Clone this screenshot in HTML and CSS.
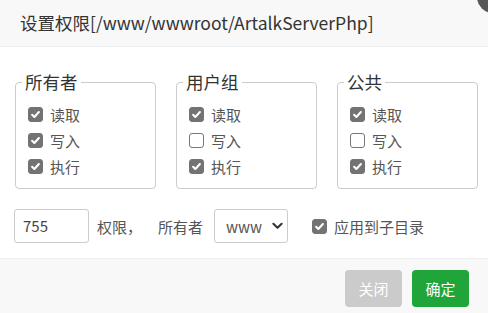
FILE: index.html
```html
<!DOCTYPE html>
<html>
<head>
<meta charset="utf-8">
<link rel="stylesheet" href="styles.css">
</head>
<body>
<div class="dialog">
  <div class="header">设置权限[/www/wwwroot/ArtalkServerPhp]</div>
  <span class="close-btn"></span>
  <div class="content">
    <div class="groups">
      <fieldset class="group">
        <legend>所有者</legend>
        <label class="row"><span class="box on"><svg viewBox="0 0 15 15"><path d="M3.6 7.8 L6.2 10.4 L11.4 4.6" /></svg></span>读取</label>
        <label class="row"><span class="box on"><svg viewBox="0 0 15 15"><path d="M3.6 7.8 L6.2 10.4 L11.4 4.6" /></svg></span>写入</label>
        <label class="row"><span class="box on"><svg viewBox="0 0 15 15"><path d="M3.6 7.8 L6.2 10.4 L11.4 4.6" /></svg></span>执行</label>
      </fieldset>
      <fieldset class="group">
        <legend>用户组</legend>
        <label class="row"><span class="box on"><svg viewBox="0 0 15 15"><path d="M3.6 7.8 L6.2 10.4 L11.4 4.6" /></svg></span>读取</label>
        <label class="row"><span class="box"></span>写入</label>
        <label class="row"><span class="box on"><svg viewBox="0 0 15 15"><path d="M3.6 7.8 L6.2 10.4 L11.4 4.6" /></svg></span>执行</label>
      </fieldset>
      <fieldset class="group">
        <legend>公共</legend>
        <label class="row"><span class="box on"><svg viewBox="0 0 15 15"><path d="M3.6 7.8 L6.2 10.4 L11.4 4.6" /></svg></span>读取</label>
        <label class="row"><span class="box"></span>写入</label>
        <label class="row"><span class="box on"><svg viewBox="0 0 15 15"><path d="M3.6 7.8 L6.2 10.4 L11.4 4.6" /></svg></span>执行</label>
      </fieldset>
    </div>
    <div class="bottom">
      <div class="input">755</div>
      <span class="lbl1">权限，</span>
      <span class="lbl2">所有者</span>
      <div class="select"><span>www</span><svg class="chev" viewBox="0 0 12 8"><path d="M1.5 1.5 L6 6 L10.5 1.5"/></svg></div>
      <label class="row sub"><span class="box on"><svg viewBox="0 0 15 15"><path d="M3.6 7.8 L6.2 10.4 L11.4 4.6" /></svg></span>应用到子目录</label>
    </div>
  </div>
  <div class="footer">
    <button class="btn gray">关闭</button>
    <button class="btn green">确定</button>
  </div>
</div>
</body>
</html>
```
FILE: styles.css
```css
html, body {
  margin: 0;
  padding: 0;
  background: #fff;
  overflow: hidden;
}
body {
  font-family: "Noto Sans CJK SC", "Noto Sans", sans-serif;
  color: #333;
}
.dialog {
  position: relative;
  width: 488px;
  height: 313px;
}
.header {
  height: 46px;
  line-height: 46px;
  padding-left: 20px;
  font-size: 17.5px;
  color: #333;
  background: #f8f8f8;
  border-bottom: 1px solid #eee;
}
.close-btn {
  position: absolute;
  left: 477px;
  top: -19px;
  width: 32px;
  height: 32px;
  border-radius: 50%;
  background: #585858;
}
.content {
  padding-top: 25px;
}
.groups {
  display: flex;
  gap: 20px;
  padding-left: 15px;
}
.group {
  box-sizing: border-box;
  width: 141px;
  margin: 0;
  padding: 9px 12px 9px 12px;
  border: 1px solid #ccc;
  border-radius: 4px;
  min-width: 0;
}
.group legend {
  margin-left: -6px;
  padding: 0 3px;
  font-size: 17.5px;
  line-height: 20px;
  color: #333;
}
.row {
  display: flex;
  align-items: center;
  height: 26px;
  gap: 7px;
  font-size: 15px;
  color: #555;
}
.box {
  box-sizing: border-box;
  width: 15px;
  height: 15px;
  border: 1px solid #777;
  border-radius: 3px;
  background: #fff;
  flex: none;
  display: flex;
}
.box.on {
  background: #737373;
  border-color: #737373;
}
.box svg {
  width: 13px;
  height: 13px;
}
.box svg path {
  fill: none;
  stroke: #fff;
  stroke-width: 2.4;
  stroke-linecap: round;
  stroke-linejoin: round;
}
.bottom {
  display: flex;
  align-items: center;
  padding-left: 14px;
  margin-top: 20px;
  height: 34px;
  font-size: 15px;
  color: #555;
}
.input {
  box-sizing: border-box;
  width: 75px;
  height: 34px;
  line-height: 32px;
  border: 1px solid #ccc;
  border-radius: 3px;
  padding-left: 8px;
  font-size: 15px;
  color: #444;
}
.lbl1 {
  margin-left: 8px;
}
.lbl2 {
  margin-left: 16px;
}
.select {
  box-sizing: border-box;
  margin-left: 11px;
  width: 74px;
  height: 34px;
  border: 1px solid #ccc;
  border-radius: 3px;
  display: flex;
  align-items: center;
  padding-left: 11px;
  font-size: 15px;
  color: #555;
}
.chev {
  width: 11px;
  height: 8px;
  margin-left: 10px;
}
.chev path {
  fill: none;
  stroke: #333;
  stroke-width: 2.2;
  stroke-linecap: round;
  stroke-linejoin: round;
}
.sub {
  margin-left: 24px;
}
.footer {
  position: absolute;
  left: 0;
  right: 0;
  top: 258px;
  bottom: 0;
  background: #f8f8f8;
  border-top: 1px solid #eee;
  display: flex;
  justify-content: flex-end;
  gap: 10px;
  padding: 11px 19px 0 0;
  box-sizing: border-box;
}
.btn {
  width: 57px;
  height: 37px;
  border: none;
  border-radius: 4px;
  color: #fff;
  font-family: "Noto Sans CJK SC", sans-serif;
  font-size: 15px;
  padding: 0;
}
.btn.gray {
  background: #cbcbcb;
}
.btn.green {
  background: #20a53a;
}
```
